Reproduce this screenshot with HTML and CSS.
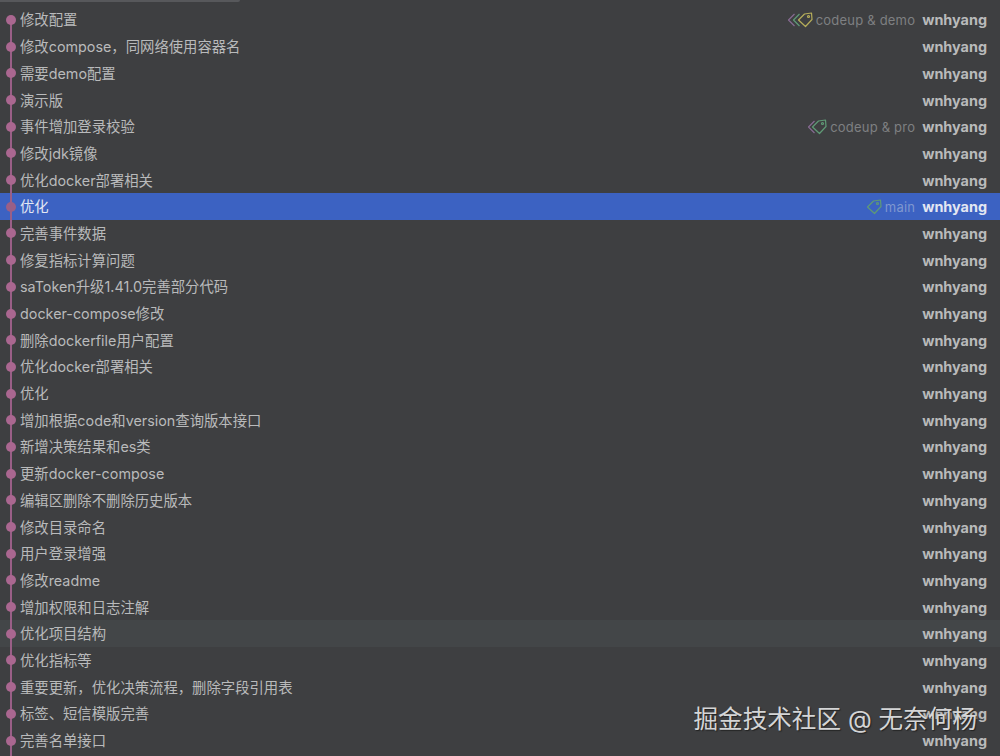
FILE: index.html
```html
<!DOCTYPE html>
<html lang="zh">
  <head>
    <meta charset="utf-8" />
    <title>Git log</title>
    <link rel="stylesheet" href="styles.css">
  </head>

  <body>
    <div class="topEdge"></div>
    <div class="log">
      <div class="row">
        <span class="dot"></span><span class="msg">修改配置</span>
        <span class="refs">
          <svg class="tag" width="26" height="16" viewBox="0 0 26 16">
            <path class="tagPurple" d="M7.5 2 L1.5 8 L7.5 14"/>
            <path class="tagGreen" d="M12.5 2 L6.5 8 L12.5 14"/>
            <path class="tagYellow" d="M17.5 2 L24.5 1 L25 7.5 L18.5 14.5 L11.5 8 Z"/>
            <circle class="tagYellow" cx="21.5" cy="4.5" r="1"/>
          </svg>
          codeup &amp; demo
        </span>
        <span class="author">wnhyang</span>
      </div>
      <div class="row"><span class="dot"></span><span class="msg">修改compose，同网络使用容器名</span><span class="author">wnhyang</span></div>
      <div class="row"><span class="dot"></span><span class="msg">需要demo配置</span><span class="author">wnhyang</span></div>
      <div class="row"><span class="dot"></span><span class="msg">演示版</span><span class="author">wnhyang</span></div>
      <div class="row">
        <span class="dot"></span><span class="msg">事件增加登录校验</span>
        <span class="refs">
          <svg class="tag" width="20" height="16" viewBox="0 0 20 16">
            <path class="tagPurple" d="M7.5 2 L1.5 8 L7.5 14"/>
            <path class="tagGreen" d="M11.5 2 L18.5 1 L19 7.5 L12.5 14.5 L5.5 8 Z"/>
            <circle class="tagGreen" cx="15.5" cy="4.5" r="1"/>
          </svg>
          codeup &amp; pro
        </span>
        <span class="author">wnhyang</span>
      </div>
      <div class="row"><span class="dot"></span><span class="msg">修改jdk镜像</span><span class="author">wnhyang</span></div>
      <div class="row"><span class="dot"></span><span class="msg">优化docker部署相关</span><span class="author">wnhyang</span></div>
      <div class="row selected">
        <span class="dot"></span><span class="msg">优化</span>
        <span class="refs">
          <svg class="tag" width="15" height="16" viewBox="0 0 15 16">
            <path class="tagGreen" d="M6.5 2 L13.5 1 L14 7.5 L7.5 14.5 L0.5 8 Z"/>
            <circle class="tagGreen" cx="10.5" cy="4.5" r="1"/>
          </svg>
          main
        </span>
        <span class="author">wnhyang</span>
      </div>
      <div class="row"><span class="dot"></span><span class="msg">完善事件数据</span><span class="author">wnhyang</span></div>
      <div class="row"><span class="dot"></span><span class="msg">修复指标计算问题</span><span class="author">wnhyang</span></div>
      <div class="row"><span class="dot"></span><span class="msg">saToken升级1.41.0完善部分代码</span><span class="author">wnhyang</span></div>
      <div class="row"><span class="dot"></span><span class="msg">docker-compose修改</span><span class="author">wnhyang</span></div>
      <div class="row"><span class="dot"></span><span class="msg">删除dockerfile用户配置</span><span class="author">wnhyang</span></div>
      <div class="row"><span class="dot"></span><span class="msg">优化docker部署相关</span><span class="author">wnhyang</span></div>
      <div class="row"><span class="dot"></span><span class="msg">优化</span><span class="author">wnhyang</span></div>
      <div class="row"><span class="dot"></span><span class="msg">增加根据code和version查询版本接口</span><span class="author">wnhyang</span></div>
      <div class="row"><span class="dot"></span><span class="msg">新增决策结果和es类</span><span class="author">wnhyang</span></div>
      <div class="row"><span class="dot"></span><span class="msg">更新docker-compose</span><span class="author">wnhyang</span></div>
      <div class="row"><span class="dot"></span><span class="msg">编辑区删除不删除历史版本</span><span class="author">wnhyang</span></div>
      <div class="row"><span class="dot"></span><span class="msg">修改目录命名</span><span class="author">wnhyang</span></div>
      <div class="row"><span class="dot"></span><span class="msg">用户登录增强</span><span class="author">wnhyang</span></div>
      <div class="row"><span class="dot"></span><span class="msg">修改readme</span><span class="author">wnhyang</span></div>
      <div class="row"><span class="dot"></span><span class="msg">增加权限和日志注解</span><span class="author">wnhyang</span></div>
      <div class="row hovered"><span class="dot"></span><span class="msg">优化项目结构</span><span class="author">wnhyang</span></div>
      <div class="row"><span class="dot"></span><span class="msg">优化指标等</span><span class="author">wnhyang</span></div>
      <div class="row"><span class="dot"></span><span class="msg">重要更新，优化决策流程，删除字段引用表</span><span class="author">wnhyang</span></div>
      <div class="row"><span class="dot"></span><span class="msg">标签、短信模版完善</span><span class="author">wnhyang</span></div>
      <div class="row"><span class="dot"></span><span class="msg">完善名单接口</span><span class="author">wnhyang</span></div>
    </div>
    <div class="watermark">掘金技术社区 @ 无奈何杨</div>
  </body>
</html>
```

FILE: styles.css
```css
html, body {
  height: 100%;
}
body {
  margin: 0;
  overflow: hidden;
  position: relative;
  background-color: #3e3f41;
  color: #b9babb;
  font-family: "Inter", "Noto Sans CJK SC", sans-serif;
  font-size: 14.35px;
}

.topEdge {
  width: 240px;
  height: 2px;
  background-color: #57585b;
  border-radius: 0 0 2px 0;
}

.log {
  position: relative;
  padding-top: 4.65px;
}
/* graph line, runs behind every row */
.log::before {
  content: "";
  position: absolute;
  left: 10px;
  top: 14px;
  bottom: -20px;
  width: 2px;
  background-color: #9a5f87;
  z-index: 1;
}

.row {
  display: flex;
  align-items: center;
  height: 26.7px;
  padding: 0 13px 0 6px;
}
.selected {
  background-color: #3c62c2;
  color: #e3e7f2;
}
.hovered {
  background-color: #434648;
}

.dot {
  width: 10px;
  height: 10px;
  margin-right: 4px;
  border-radius: 50%;
  background-color: #aa6790;
  position: relative;
  z-index: 2;
}
.selected .dot {
  background-color: #9a5f87;
}

.msg {
  flex: 1;
  padding-bottom: 2px;
  white-space: nowrap;
}

.refs {
  display: flex;
  align-items: center;
  gap: 3px;
  margin-right: 7px;
  font-size: 13px;
  letter-spacing: 0.2px;
  color: #7e8082;
}
.selected .refs {
  color: #7f97cf;
}

.tag {
  fill: none;
  stroke-width: 1.2;
  stroke-linejoin: round;
}
.tagPurple {
  stroke: #866a92;
}
.tagGreen {
  stroke: #5f9a76;
}
.tagYellow {
  stroke: #b5ad5a;
}

.author {
  font-weight: 700;
  font-size: 14.4px;
  color: #b9babb;
}
.selected .author {
  color: #e3e7f2;
}

.watermark {
  position: absolute;
  right: 23px;
  bottom: 21px;
  z-index: 3;
  font-size: 24.6px;
  color: #d4d5d6;
  text-shadow: 1px 1px 1px #222;
  white-space: nowrap;
}
```
